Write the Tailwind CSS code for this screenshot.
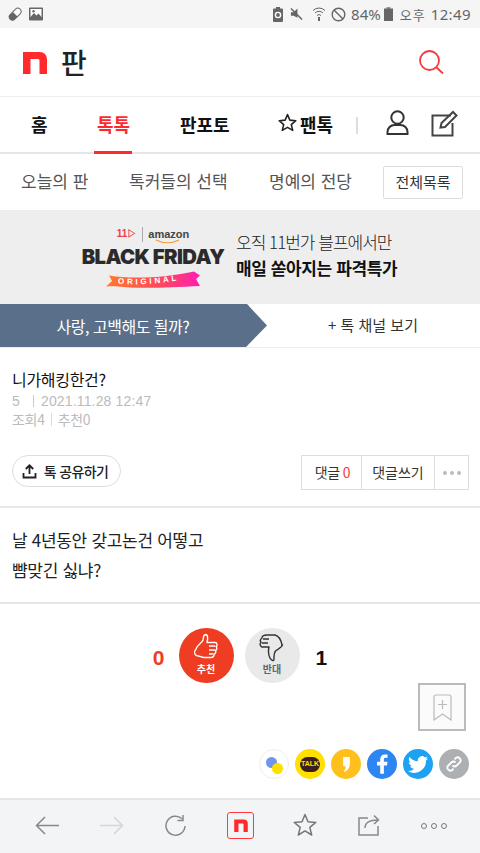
<!DOCTYPE html>
<html lang="ko">
<head>
    <meta charset="UTF-8">
    <meta name="viewport" content="width=device-width, initial-scale=1.0">
    <title>판</title>
    <script src="https://cdn.jsdelivr.net/npm/@tailwindcss/browser@4"></script>
</head>
<body class="bg-white w-[480px] h-[853px] overflow-hidden flex flex-col font-['Noto_Sans_CJK_KR','Noto_Sans',sans-serif] text-[#222]">

    <!-- status bar -->
    <div class="h-[28px] bg-[#f5f5f5] flex items-center justify-between pl-[7px] pr-[9px] text-[#666] shrink-0">
        <div class="flex items-center gap-[6px]">
            <svg width="16" height="16" viewBox="0 0 16 16"><g transform="rotate(-45 8 8)"><rect x="1" y="5" width="14" height="6.5" rx="3.2" fill="#fff" stroke="#666" stroke-width="1"/><path d="M4 5h4v6.5H4a3.2 3.2 0 0 1 0-6.5z" fill="#666"/></g></svg>
            <svg width="15" height="14" viewBox="0 0 15 14"><rect width="14" height="13" y="0.5" rx="1" fill="#666"/><rect x="1.5" y="2" width="11" height="8" fill="#fff"/><path d="M1.5 10l3.5-4 2.5 2.5 2-2 3 3.5z" fill="#666"/><circle cx="4.5" cy="4.2" r="1.2" fill="#666"/></svg>
        </div>
        <div class="flex items-center">
            <svg class="mr-[7px]" width="10" height="15" viewBox="0 0 10 15"><rect x="3" y="0" width="4" height="2" fill="#666"/><rect y="1.5" width="10" height="13.5" rx="1" fill="#666"/><circle cx="5" cy="8" r="2.6" fill="none" stroke="#fff" stroke-width="1.4"/></svg>
            <svg class="mr-[9px]" width="13" height="14" viewBox="0 0 14 14"><path d="M1 5h3l4-4v10L4 9H1z" fill="#666"/><path d="M1 1l12 12" stroke="#666" stroke-width="1.6"/></svg>
            <svg class="mr-[5px]" width="14" height="16" viewBox="0 0 14 16" fill="none" stroke="#666" stroke-width="1"><path d="M1 4.500a8.500 8.500 0 0 1 12 0M3 7a5.600 5.600 0 0 1 8 0M5 9.500a2.800 2.800 0 0 1 4 0"/><path d="M7 11v4" stroke-width="2"/></svg>
            <svg class="mr-[5px]" width="15" height="15" viewBox="0 0 15 15" fill="none" stroke="#666" stroke-width="1.400"><circle cx="7.500" cy="7.500" r="6.300"/><path d="M3 3l9 9"/></svg>
            <span class="text-[15px] leading-none font-['Noto_Sans',sans-serif]">84%</span>
            <svg class="ml-[3px] mr-[7px]" width="9" height="14" viewBox="0 0 9 14"><rect x="2.500" width="4" height="2" fill="#999"/><rect y="1.500" width="9" height="12.500" fill="#666"/></svg>
            <span class="text-[13px] leading-none tracking-[1px]">오후</span>
            <span class="ml-[5px] text-[15px] leading-none tracking-[0.4px] font-['Noto_Sans',sans-serif]">12:49</span>
        </div>
    </div>

    <!-- logo header -->
    <header class="h-[69px] border-b border-[#eee] flex items-center justify-between pl-[23px] pr-[36px] shrink-0">
        <div class="flex items-center gap-[14px]">
            <svg width="24" height="23" viewBox="0 0 24 23"><path d="M0 1h17a7 7 0 0 1 7 7v15h-7.500V9.500a1.500 1.500 0 0 0-1.500-1.500H7.500v15H0z" fill="#ff2a2e"/></svg>
            <span class="text-[28px] font-medium leading-none text-[#222]">판</span>
        </div>
        <svg width="25" height="25" viewBox="0 0 25 25" fill="none" stroke="#f53a3a" stroke-width="1.800"><circle cx="10.500" cy="10.500" r="9.500"/><path d="M17.500 17.500l6.500 6"/></svg>
    </header>

    <!-- main tabs -->
    <nav class="h-[57px] border-b-2 border-[#e5e5e5] flex items-center relative shrink-0 text-[18px] font-bold text-[#111]">
        <span class="absolute left-[31px] top-[13px] leading-[28px]">홈</span>
        <span class="absolute left-[97px] top-[13px] leading-[28px] text-[#ff2a2e]">톡톡</span>
        <span class="absolute left-[94px] bottom-[-2px] w-[38px] h-[3px] bg-[#ff2a2e]"></span>
        <span class="absolute left-[180px] top-[13px] leading-[28px]">판포토</span>
        <svg class="absolute left-[278px] top-[16px]" width="19" height="19" viewBox="0 0 24 24" fill="none" stroke="#222" stroke-width="2" stroke-linejoin="round"><path d="M12 2l3 7 7.500 .7-5.700 5 1.800 7.300L12 18.200 5.400 22l1.800-7.300-5.700-5L9 9z"/></svg>
        <span class="absolute left-[300px] top-[13px] leading-[28px]">팬톡</span>
        <span class="absolute left-[356px] top-[20px] w-[2px] h-[17px] bg-[#ddd]"></span>
        <svg class="absolute left-[386px] top-[13px]" width="23" height="25" viewBox="0 0 23 25" fill="none" stroke="#333" stroke-width="2"><circle cx="11.500" cy="7.500" r="6.200"/><path d="M1.500 24v-2a7 7 0 0 1 7-7h6a7 7 0 0 1 7 7v2z"/></svg>
        <svg class="absolute left-[431px] top-[13px]" width="27" height="27" viewBox="0 0 27 27" fill="none" stroke="#444" stroke-width="2"><path d="M20 5.500H1.500v20h20V13"/><path d="M9.500 17.500l1-4.500L22 2l3.500 3.500L14 17z"/></svg>
    </nav>

    <!-- sub menu -->
    <div class="h-[56px] flex items-center relative shrink-0 text-[17px] text-[#555]">
        <span class="absolute left-[21px] top-[13px] leading-[28px]">오늘의 판</span>
        <span class="absolute left-[129px] top-[13px] leading-[28px]">톡커들의 선택</span>
        <span class="absolute left-[269px] top-[13px] leading-[28px]">명예의 전당</span>
        <span class="absolute left-[383px] top-[12px] w-[80px] h-[33px] border border-[#ddd] rounded-[2px] text-[15px] text-[#333] flex items-center justify-center">전체목록</span>
    </div>

    <!-- banner -->
    <div class="h-[94px] bg-[#eeeeee] flex shrink-0 relative">
        <div class="absolute left-[82px] top-[16px] w-[142px] flex flex-col items-center">
            <div class="flex items-center h-[16px] gap-[5px] font-['Liberation_Sans',sans-serif]">
                <span class="text-[10px] font-bold text-[#ef3a4a] leading-none">11▷</span>
                <span class="w-px h-[15px] bg-[#aaa]"></span>
                <div class="relative">
                    <span class="block text-[11px] font-bold text-[#444] leading-none">amazon</span>
                    <svg class="absolute left-[7px] top-[10px]" width="26" height="5" viewBox="0 0 26 5" fill="none" stroke="#f29a2e" stroke-width="1.200"><path d="M1 1c7 3.500 16 3.500 23 0"/></svg>
                </div>
            </div>
            <div class="text-[20.300px] font-['Inter',sans-serif] font-black text-[#2b2b2b] leading-[24px] mt-[3px] whitespace-nowrap tracking-[-0.6px]">BLACK FRIDAY</div>
            <svg class="mt-[1px]" width="94" height="18" viewBox="0 0 94 18">
                <defs>
                    <linearGradient id="ribbon" x1="0" x2="1" y1="0" y2="0"><stop offset="0" stop-color="#ff7a2a"/><stop offset="0.55" stop-color="#ff4a5a"/><stop offset="1" stop-color="#ff1fb0"/></linearGradient>
                    <path id="ribbonline" d="M12 13.500C30 16 62 13 84 8"/>
                </defs>
                <path d="M0 16.500L6 11 3 5.500C26 9.500 62 7.500 88 1.500L94 5.500 90 9 94 16C64 17.500 30 19 12 16.500 8 16 4 16 0 16.500z" fill="url(#ribbon)"/>
                <text class="font-['Liberation_Sans',sans-serif] font-bold" font-size="8" letter-spacing="2.800" fill="#fff"><textPath href="#ribbonline">ORIGINAL</textPath></text>
            </svg>
        </div>
        <div class="absolute left-[236px] top-[19px] text-[#222] whitespace-nowrap">
            <div class="text-[17px] leading-[26px] font-light tracking-[-1px]">오직 11번가 블프에서만</div>
            <div class="text-[17px] leading-[26px] font-bold text-[#111] tracking-[-0.4px]">매일 쏟아지는 파격특가</div>
        </div>
    </div>

    <!-- channel bar -->
    <div class="h-[44px] border-b border-[#eee] flex items-center shrink-0">
        <div class="w-[267px] h-[43px] bg-[#5a6f8a] [clip-path:polygon(0_0,247px_0,267px_50%,246px_100%,0_100%)] flex items-center justify-center pr-[21px] text-white text-[16px] tracking-[-0.5px]">사랑, 고백해도 될까?</div>
        <div class="flex-1 text-center text-[15px] text-[#333] pr-[1px] tracking-[0px]">+ 톡 채널 보기</div>
    </div>

    <!-- post head -->
    <div class="h-[160px] border-b-2 border-[#e8e8e8] px-[12px] pt-[18px] shrink-0 relative">
        <h1 class="text-[16px] leading-[26px] text-[#111] tracking-[-0.3px]">니가해킹한건?</h1>
        <div class="text-[14px] leading-[18px] text-[#bbb] flex items-center font-['Liberation_Sans',sans-serif]">
            <span class="w-[21px]">5</span><span class="w-px h-[12px] bg-[#ccc] mr-[7px]"></span><span class="tracking-[0.15px]">2021.11.28 12:47</span>
        </div>
        <div class="text-[14px] leading-[19px] text-[#bbb] flex items-center tracking-[-0.3px]">
            <span>조회4</span><span class="w-px h-[13px] bg-[#ddd] mx-[6px]"></span><span>추천0</span>
        </div>
        <div class="absolute left-[12px] right-[11px] top-[107px] flex justify-between items-start">
            <button class="w-[109px] h-[32px] border border-[#ddd] rounded-full flex items-center justify-center gap-[7px] pr-[3px] text-[14px] font-medium text-[#222]">
                <svg width="15" height="15" viewBox="0 0 15 15" fill="none" stroke="#222" stroke-width="1.800"><path d="M7.500 10V1.500M3.800 5l3.700-3.700L11.200 5M1.500 9v4.500h12V9"/></svg>
                <span class="tracking-[-0.6px]">톡 공유하기</span>
            </button>
            <div class="h-[35px] border border-[#ddd] flex items-stretch text-[14px] text-[#333]">
                <span class="w-[60px] border-r border-[#ddd] flex items-center justify-center gap-[3px] tracking-[-0.3px] pl-[2px]">댓글<span class="text-[#f53a3a]">0</span></span>
                <span class="w-[73px] border-r border-[#ddd] flex items-center justify-center">댓글쓰기</span>
                <span class="w-[33px] flex items-center justify-center gap-[3px]">
                    <i class="w-[4px] h-[4px] rounded-full bg-[#bbb]"></i><i class="w-[4px] h-[4px] rounded-full bg-[#bbb]"></i><i class="w-[4px] h-[4px] rounded-full bg-[#bbb]"></i>
                </span>
            </div>
        </div>
    </div>

    <!-- post body -->
    <div class="h-[96px] border-b-2 border-[#e5e5e5] px-[12px] pt-[17px] text-[17px] leading-[30px] text-[#222] tracking-[-0.3px] shrink-0">
        <p>날 4년동안 갖고논건 어떻고</p>
        <p>뺨맞긴 싫냐?</p>
    </div>

    <!-- votes + share -->
    <div class="flex-1 relative">
        <div class="flex justify-center items-center pt-[24px]">
            <span class="text-[21px] font-bold text-[#ee3d23] mr-[14px] mt-[5px] font-['Liberation_Sans',sans-serif]">0</span>
            <div class="w-[55px] h-[55px] rounded-full bg-[#ee3d23] flex flex-col items-center pt-[5px] mr-[11px]">
                <svg width="26" height="30" viewBox="0 0 26 30" fill="none" stroke="#fff" stroke-width="1.400" stroke-linejoin="round"><path d="M3 16c1-4 6-6 7-9 .5-2 0-5 2.500-5.500 2.500 0 2.500 4 1.500 8h8c2.500 0 2.500 3.500 1 4 1.500 1 1 3.500-.5 4 .8 1.500 0 3.300-1.500 3.500.5 2-1 3.500-3 3.500h-7c-3 0-3.500-1.500-6-1.500-3 0-5-3.500-2-7z"/><path d="M16 13h6M16 17h6M16 21h4"/></svg>
                <span class="text-[10px] font-bold text-white leading-[14px] -mt-[1px]">추천</span>
            </div>
            <div class="w-[55px] h-[55px] rounded-full bg-[#e9e9e9] flex flex-col items-center pt-[5px]">
                <svg width="26" height="30" viewBox="0 0 26 30" fill="none" stroke="#333" stroke-width="1.400" stroke-linejoin="round"><path d="M23 12c-1-5-3-9-7-10H8C5 2 3 3 3 5 1.500 6 1 8 2 9.500.5 11 1 13 3 14h7c-1 4-.5 8 1 11 1 2 4 4 4 1 0-3-.5-5 1.500-8 2-2 6-3 7-6z"/><path d="M4 6h6M3 10h6"/></svg>
                <span class="text-[10px] font-bold text-[#666] leading-[14px] -mt-[1px]">반대</span>
            </div>
            <span class="text-[21px] font-bold text-[#111] ml-[16px] mt-[5px] font-['Liberation_Sans',sans-serif]">1</span>
        </div>

        <!-- scrap -->
        <div class="absolute left-[418px] top-[79px] w-[48px] h-[48px] border-2 border-[#bbb] bg-[#fbfbfb] flex items-center justify-center">
            <svg width="19" height="27" viewBox="0 0 19 27" fill="none" stroke="#bbb" stroke-width="1.200"><path d="M1 26V3a2 2 0 0 1 2-2h13a2 2 0 0 1 2 2v23l-8.500-6z"/><path d="M9.500 6v9M5 10.500h9"/></svg>
        </div>

        <!-- share icons -->
        <div class="absolute left-[259px] top-[145px] flex gap-[6px]">
            <div class="w-[30px] h-[30px] rounded-full border border-[#eee] bg-white relative">
                <span class="absolute left-[6px] top-[7px] w-[11px] h-[11px] rounded-full bg-[#7394e8]"></span>
                <span class="absolute left-[12px] top-[13px] w-[11px] h-[11px] rounded-full bg-[#ffdf00]"></span>
            </div>
            <div class="w-[30px] h-[30px] rounded-full bg-[#ffe000] flex items-center justify-center">
                <span class="w-[20px] h-[15px] rounded-full bg-[#3c1e1e] text-[#ffe000] text-[7px] font-bold font-['Liberation_Sans',sans-serif] flex items-center justify-center">TALK</span>
            </div>
            <div class="w-[30px] h-[30px] rounded-full bg-[#ffc01e] flex items-center justify-center">
                <svg width="9" height="15" viewBox="0 0 10 18"><path d="M1 0h8v8c0 4-2 7.500-6 10l-1-1c1.500-2 2-3.500 2-6H1z" fill="#fff"/></svg>
            </div>
            <div class="w-[30px] h-[30px] rounded-full bg-[#2d86f1] flex items-center justify-center">
                <svg width="11" height="20" viewBox="0 0 12 21"><path d="M3.500 21V12H0V8h3.500V5.500C3.500 2 5.500 0 8.500 0c1.300 0 2.500.1 3 .2v3.500H9.500C8 3.700 7.500 4.500 7.500 5.700V8h4l-.6 4H7.500v9z" fill="#fff"/></svg>
            </div>
            <div class="w-[30px] h-[30px] rounded-full bg-[#1da1f2] flex items-center justify-center">
                <svg width="20" height="17" viewBox="0 0 24 20"><path d="M24 2.400c-.9.400-1.800.7-2.800.8 1-.6 1.800-1.600 2.200-2.700-1 .6-2 1-3.100 1.200A4.900 4.900 0 0 0 11.900 6.200C7.800 6 4.200 4 1.700.9.400 3.100 1 6 3.200 7.500c-.8 0-1.600-.2-2.200-.6 0 2.400 1.700 4.400 3.900 4.900-.7.200-1.500.2-2.200.1.600 2 2.400 3.400 4.600 3.400A9.900 9.900 0 0 1 0 17.800 14 14 0 0 0 21.500 5.400c1-.7 1.800-1.600 2.500-3z" fill="#fff"/></svg>
            </div>
            <div class="w-[30px] h-[30px] rounded-full bg-[#adb0b3] flex items-center justify-center">
                <svg width="18" height="18" viewBox="0 0 18 18" fill="none" stroke="#fff" stroke-width="1.800"><path d="M7.500 10.500a3 3 0 0 0 4.200 0l3.300-3.300a3 3 0 0 0-4.200-4.200L9.500 4.300"/><path d="M10.500 7.500a3 3 0 0 0-4.200 0L3 10.800A3 3 0 0 0 7.200 15l1.300-1.300"/></svg>
            </div>
        </div>
    </div>

    <!-- browser bar -->
    <div class="h-[55px] bg-[#f3f4f6] border-t-2 border-[#e6e6e8] relative shrink-0">
        <svg class="absolute left-[35px] top-[16px]" width="25" height="19" viewBox="0 0 25 19" fill="none" stroke="#888" stroke-width="1.500"><path d="M24 9.500H1.500M10 1L1.500 9.500 10 18"/></svg>
        <svg class="absolute left-[99px] top-[16px]" width="25" height="19" viewBox="0 0 25 19" fill="none" stroke="#d4d5dc" stroke-width="1.500"><path d="M1 9.500h22.500M15 1l8.500 8.500L15 18"/></svg>
        <svg class="absolute left-[165px] top-[15px]" width="21" height="22" viewBox="0 0 21 22" fill="none" stroke="#888" stroke-width="1.500"><path d="M17 3.800A9.500 9.500 0 1 0 20 11"/><path d="M12.500 5.500h5.500V0"/></svg>
        <div class="absolute left-[227px] top-[12px] w-[27px] h-[27px] border border-[#ff3b40] rounded-[3px] flex items-center justify-center">
            <svg width="14" height="13" viewBox="0 0 24 23"><path d="M0 1h17a7 7 0 0 1 7 7v15h-7.500V9.500a1.500 1.500 0 0 0-1.500-1.500H7.500v15H0z" fill="#ff2a2e"/></svg>
        </div>
        <svg class="absolute left-[293px] top-[13px]" width="24" height="23" viewBox="0 0 24 23" fill="none" stroke="#777" stroke-width="1.500" stroke-linejoin="round"><path d="M12 1.500l3 7.300 7.800.6-6 5 1.900 7.600L12 17.900 5.300 22l1.900-7.600-6-5 7.800-.6z"/></svg>
        <svg class="absolute left-[358px] top-[14px]" width="22" height="22" viewBox="0 0 22 22" fill="none" stroke="#888" stroke-width="1.500"><path d="M10 4H1v17h19v-9"/><path d="M7 14c0-5 4-8 13-8M16 1.500L20.500 6 16 10"/></svg>
        <div class="absolute left-[421px] top-[23px] flex gap-[4px]">
            <i class="w-[6px] h-[6px] rounded-full border border-[#777]"></i><i class="w-[6px] h-[6px] rounded-full border border-[#777]"></i><i class="w-[6px] h-[6px] rounded-full border border-[#777]"></i>
        </div>
    </div>

</body>
</html>
